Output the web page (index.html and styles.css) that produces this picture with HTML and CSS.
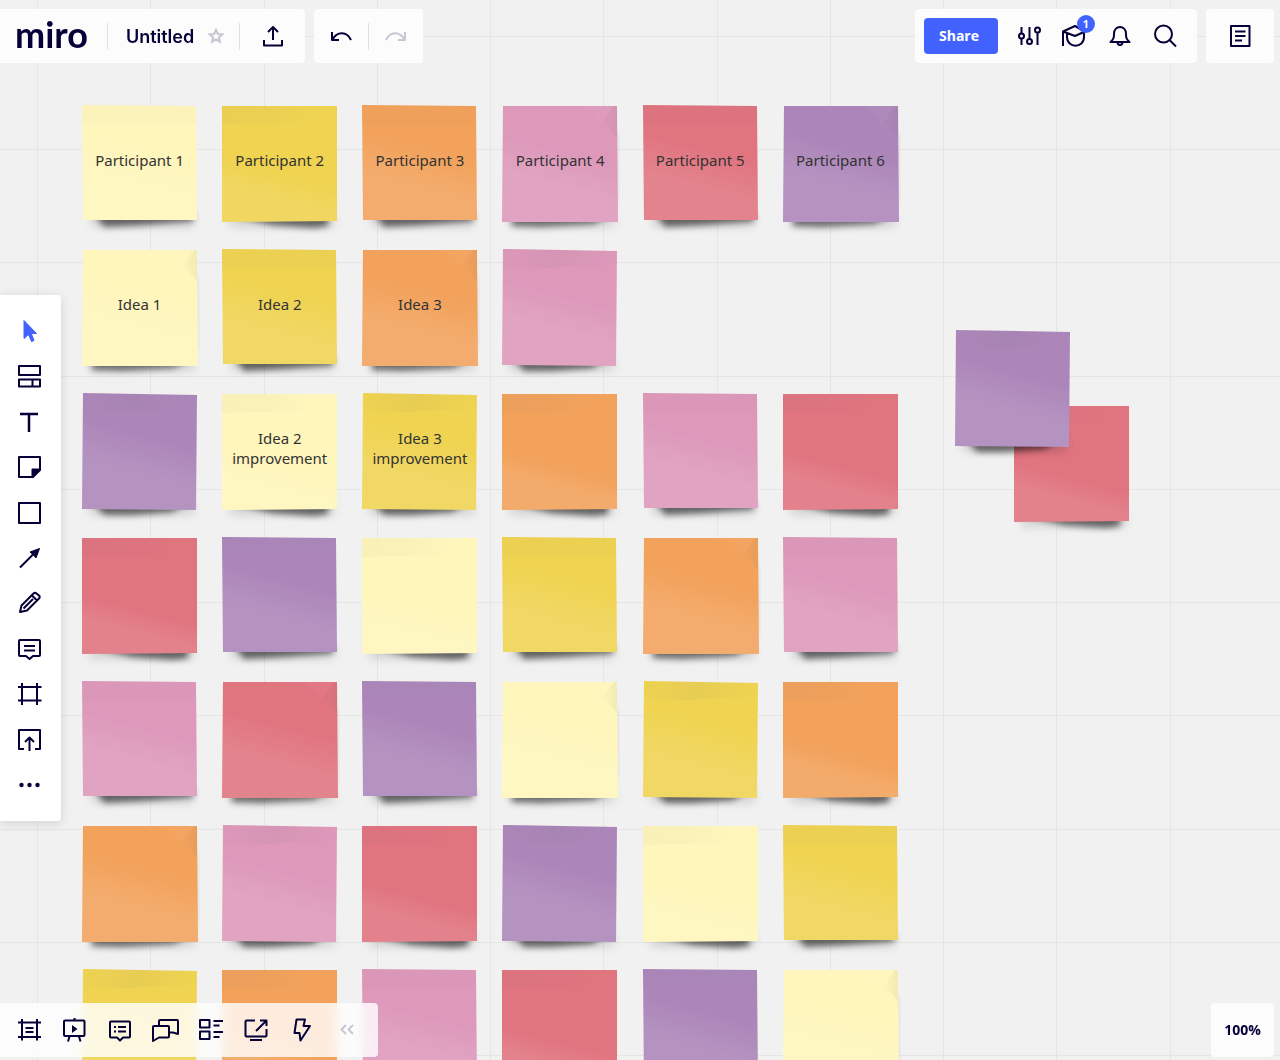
FILE: index.html
```html
<!DOCTYPE html>
<html lang="en">
<head>
<meta charset="utf-8">
<meta name="viewport" content="width=device-width, initial-scale=1">
<title>Untitled - miro</title>
<link rel="stylesheet" href="styles.css">
</head>
<body>
<svg class="sprite" width="0" height="0" aria-hidden="true">
  <defs>
    <filter id="soft" x="-20%" y="-200%" width="140%" height="500%"><feGaussianBlur stdDeviation="3"/></filter>
    <filter id="haze" x="-20%" y="-200%" width="140%" height="500%"><feGaussianBlur stdDeviation="5"/></filter>
    <linearGradient id="sheen-mid" gradientUnits="userSpaceOnUse" x1="62" y1="42" x2="52" y2="80"><stop offset="0" stop-color="#fff" stop-opacity="0"/><stop offset="1" stop-color="#fff" stop-opacity=".11"/></linearGradient>
    <linearGradient id="sheen-low" gradientUnits="userSpaceOnUse" x1="60" y1="72" x2="54" y2="95"><stop offset="0" stop-color="#fff" stop-opacity="0"/><stop offset="1" stop-color="#fff" stop-opacity=".1"/></linearGradient>
    <linearGradient id="tape-left"><stop offset="0" stop-color="#666" stop-opacity=".04"/><stop offset=".4" stop-color="#666" stop-opacity=".03"/><stop offset=".8" stop-color="#666" stop-opacity="0"/></linearGradient>
    <linearGradient id="tape-mid"><stop offset="0" stop-color="#666" stop-opacity=".01"/><stop offset=".45" stop-color="#666" stop-opacity=".06"/><stop offset="1" stop-color="#666" stop-opacity="0"/></linearGradient>
    <linearGradient id="curl" x1="0" y1="0" x2="1" y2="0"><stop offset="0" stop-color="#666" stop-opacity="0"/><stop offset="1" stop-color="#666" stop-opacity=".08"/></linearGradient>
  </defs>
  <symbol id="paper-flat" viewBox="0 0 116 117" overflow="visible">
    <path d="M8 108H112V122H10Z" fill="#000" opacity=".12" filter="url(#haze)"/>
    <path d="M12 108H111V116L60 120L22 122Z" fill="#000" opacity=".55" filter="url(#soft)"/>
    <path d="M0 0L114 1L115 115H1Z" fill="currentColor"/>
    <path d="M0 0L114 1V20H0Z" fill="#666" opacity=".02"/>
    <path d="M0 0L114 1L115 115H1Z" fill="url(#sheen-mid)"/>
  </symbol>
  <symbol id="paper-tape" viewBox="0 0 116 117" overflow="visible">
    <path d="M6 108H112V122H8Z" fill="#000" opacity=".12" filter="url(#haze)"/>
    <path d="M10 110H106V121L92 123L50 120Z" fill="#000" opacity=".55" filter="url(#soft)"/>
    <path d="M0 1H115V116L0 117Z" fill="currentColor"/>
    <path d="M0 1H115V17L0 20Z" fill="url(#tape-left)"/>
    <path d="M0 1H115V116L0 117Z" fill="url(#sheen-low)"/>
  </symbol>
  <symbol id="paper-fold" viewBox="0 0 116 117" overflow="visible">
    <path d="M6 108H112V122H8Z" fill="#000" opacity=".12" filter="url(#haze)"/>
    <path d="M108 20L116 30V100H108Z" fill="#000" opacity=".08" filter="url(#soft)"/>
    <path d="M10 110H108L92 119L40 122L10 121Z" fill="#000" opacity=".5" filter="url(#soft)"/>
    <path d="M1 1H115L116 117H0Z" fill="currentColor"/>
    <path d="M1 1H115L116 117H0Z" fill="url(#sheen-mid)"/>
    <path d="M79 1H112L99 19Q94 10 79 1Z" fill="#fff" opacity=".03"/>
    <path d="M112 1H115V33Q106 19 99 19Z" fill="url(#curl)"/>
  </symbol>
  <symbol id="paper-tilt" viewBox="0 0 116 117" overflow="visible">
    <path d="M6 108H112V122H8Z" fill="#000" opacity=".12" filter="url(#haze)"/>
    <path d="M10 108H108L90 119L50 122L22 122Z" fill="#000" opacity=".55" filter="url(#soft)"/>
    <path d="M1 0L115 2L114 117L0 116Z" fill="currentColor"/>
    <path d="M1 0L115 2V17Q60 17 30 20L1 18Z" fill="url(#tape-mid)"/>
    <path d="M1 0L115 2L114 117L0 116Z" fill="url(#sheen-mid)"/>
  </symbol>
</svg>

<main class="board" aria-label="Board">
  <div class="notes">
    <div class="note cream"><svg class="paper"><use href="#paper-flat"/></svg><p>Participant 1</p></div>
    <div class="note yellow"><svg class="paper"><use href="#paper-tape"/></svg><p>Participant 2</p></div>
    <div class="note orange"><svg class="paper"><use href="#paper-flat"/></svg><p>Participant 3</p></div>
    <div class="note pink"><svg class="paper"><use href="#paper-fold"/></svg><p>Participant 4</p></div>
    <div class="note red"><svg class="paper"><use href="#paper-flat"/></svg><p>Participant 5</p></div>
    <div class="note purple"><svg class="paper"><use href="#paper-fold"/></svg><p>Participant 6</p></div>

    <div class="note cream"><svg class="paper"><use href="#paper-fold"/></svg><p>Idea 1</p></div>
    <div class="note yellow"><svg class="paper"><use href="#paper-flat"/></svg><p>Idea 2</p></div>
    <div class="note orange"><svg class="paper"><use href="#paper-fold"/></svg><p>Idea 3</p></div>
    <div class="note pink"><svg class="paper"><use href="#paper-tilt"/></svg></div>

    <div class="note purple row-start"><svg class="paper"><use href="#paper-tilt"/></svg></div>
    <div class="note cream"><svg class="paper"><use href="#paper-tape"/></svg><p>Idea 2 improvement</p></div>
    <div class="note yellow"><svg class="paper"><use href="#paper-tilt"/></svg><p>Idea 3 improvement</p></div>
    <div class="note orange"><svg class="paper"><use href="#paper-tape"/></svg></div>
    <div class="note pink"><svg class="paper"><use href="#paper-flat"/></svg></div>
    <div class="note red"><svg class="paper"><use href="#paper-tape"/></svg></div>

    <div class="note red"><svg class="paper"><use href="#paper-tape"/></svg></div>
    <div class="note purple"><svg class="paper"><use href="#paper-flat"/></svg></div>
    <div class="note cream"><svg class="paper"><use href="#paper-tape"/></svg></div>
    <div class="note yellow"><svg class="paper"><use href="#paper-flat"/></svg></div>
    <div class="note orange"><svg class="paper"><use href="#paper-fold"/></svg></div>
    <div class="note pink"><svg class="paper"><use href="#paper-flat"/></svg></div>

    <div class="note pink"><svg class="paper"><use href="#paper-flat"/></svg></div>
    <div class="note red"><svg class="paper"><use href="#paper-fold"/></svg></div>
    <div class="note purple"><svg class="paper"><use href="#paper-flat"/></svg></div>
    <div class="note cream"><svg class="paper"><use href="#paper-fold"/></svg></div>
    <div class="note yellow"><svg class="paper"><use href="#paper-tilt"/></svg></div>
    <div class="note orange"><svg class="paper"><use href="#paper-tape"/></svg></div>

    <div class="note orange"><svg class="paper"><use href="#paper-fold"/></svg></div>
    <div class="note pink"><svg class="paper"><use href="#paper-tilt"/></svg></div>
    <div class="note red"><svg class="paper"><use href="#paper-tape"/></svg></div>
    <div class="note purple"><svg class="paper"><use href="#paper-tilt"/></svg></div>
    <div class="note cream"><svg class="paper"><use href="#paper-tape"/></svg></div>
    <div class="note yellow"><svg class="paper"><use href="#paper-flat"/></svg></div>

    <div class="note yellow"><svg class="paper"><use href="#paper-tilt"/></svg></div>
    <div class="note orange"><svg class="paper"><use href="#paper-tape"/></svg></div>
    <div class="note pink"><svg class="paper"><use href="#paper-flat"/></svg></div>
    <div class="note red"><svg class="paper"><use href="#paper-tape"/></svg></div>
    <div class="note purple"><svg class="paper"><use href="#paper-flat"/></svg></div>
    <div class="note cream"><svg class="paper"><use href="#paper-fold"/></svg></div>
  </div>
  <div class="note red loose loose-red"><svg class="paper"><use href="#paper-tape"/></svg></div>
  <div class="note purple loose loose-purple"><svg class="paper"><use href="#paper-tilt"/></svg></div>
</main>

<div class="chrome">
  <header class="topbar">
    <div class="panel title-panel">
      <a class="logo" href="#">miro</a>
      <span class="divider"></span>
      <button class="board-name" type="button">Untitled</button>
      <button class="star" type="button" aria-label="Star this board"><svg viewBox="0 0 16 16"><path d="M8 1.8L9.8 6L14.4 6.4L10.9 9.4L12 13.9L8 11.5L4 13.9L5.1 9.4L1.6 6.4L6.2 6Z"/></svg></button>
      <span class="divider"></span>
      <button class="icon export" type="button" aria-label="Export"><svg viewBox="0 0 24 24"><path d="M12 16V3M7 8L12 3L17 8M3 16V21.500H21V16"/></svg></button>
    </div>
    <div class="panel history-panel">
      <button class="icon" type="button" aria-label="Undo"><svg viewBox="0 0 24 24"><path d="M3 8V16H10M3.500 15.500C8 7 18 7 22 16"/></svg></button>
      <span class="divider"></span>
      <button class="icon faded" type="button" aria-label="Redo"><svg viewBox="0 0 24 24"><path d="M21 8V16H14M20.500 15.500C16 7 6 7 2 16"/></svg></button>
    </div>
    <div class="panel actions-panel">
      <button class="share" type="button">Share</button>
      <button class="icon" type="button" aria-label="Settings"><svg viewBox="0 0 24 24"><path d="M3.500 3V9M3.500 15V21M11.500 3V15M19.500 9V21"/><circle cx="3.500" cy="12" r="2.500"/><circle cx="11.500" cy="17.500" r="2.500"/><circle cx="19.500" cy="6" r="2.500"/></svg></button>
      <button class="icon learn" type="button" aria-label="Learning center, 1 new"><svg viewBox="0 0 24 24"><path d="M0 22V7.500L12 2L22 7.500L12 12L0 7.500M4 9.500V13C4 24.500 21 24.500 21 13V9"/></svg><span class="count">1</span></button>
      <button class="icon" type="button" aria-label="Notifications"><svg viewBox="0 0 24 24"><path d="M2.500 18C6 15 6 13 6 10C6 0.500 18 0.500 18 10C18 13 18 15 21.500 18ZM9.500 18C9.500 22 14.500 22 14.500 18"/></svg></button>
      <button class="icon" type="button" aria-label="Search"><svg viewBox="0 0 24 24"><circle cx="10.500" cy="10" r="8.500"/><path d="M16.500 16L23 22.500"/></svg></button>
    </div>
    <div class="panel notes-panel">
      <button class="icon" type="button" aria-label="Notes"><svg viewBox="0 0 24 24"><path d="M3 2H21.500V22H3Z"/><path d="M7 7.500H17.500M7 12H17.500M7 16.500H14"/></svg></button>
    </div>
  </header>

  <nav class="tools" aria-label="Tools">
    <button class="icon active" type="button" aria-label="Select"><svg viewBox="0 0 24 24"><path class="solid" d="M6 1.500V19.500L10.500 15.500L13.500 22.500L16 21.500L13.300 14.500H18.500Z"/></svg></button>
    <button class="icon" type="button" aria-label="Templates"><svg viewBox="0 0 24 24"><path d="M1 2H22V11H1ZM1 15.500H22V22.500H1ZM14.500 15.500V22.500"/></svg></button>
    <button class="icon" type="button" aria-label="Text"><svg viewBox="0 0 24 24"><path class="thick" d="M2 4H20M11 4V22"/></svg></button>
    <button class="icon" type="button" aria-label="Sticky note"><svg viewBox="0 0 24 24"><path d="M1 2H22V15L15 22H1Z"/><path class="solid" d="M14 22V14H22L14 22Z"/></svg></button>
    <button class="icon" type="button" aria-label="Shape"><svg viewBox="0 0 24 24"><path d="M1 2H22V22H1Z"/></svg></button>
    <button class="icon" type="button" aria-label="Connection line"><svg viewBox="0 0 24 24"><path d="M2 21.500L16 7.500"/><path class="solid" d="M21.500 2.500L18 12L15.500 9L12 6Z"/></svg></button>
    <button class="icon" type="button" aria-label="Pen"><svg viewBox="0 0 24 24"><path d="M2 21L3.500 14.500L15.500 2.500Q17 1 18.500 2.500L21 4.500Q22.500 6 21 7.500L9 19.500ZM14 4.500L19 9.500M5.500 17.500L15 8"/></svg></button>
    <button class="icon" type="button" aria-label="Comment"><svg viewBox="0 0 24 24"><path d="M2 3H21Q22 3 22 4V18Q22 19 21 19H15L11.500 22L8 19H2Q1 19 1 18V4Q1 3 2 3ZM6 9H17M6 13.500H17"/></svg></button>
    <button class="icon" type="button" aria-label="Frame"><svg viewBox="0 0 24 24"><path d="M4 1V23M19 1V23M0 5H23.500M0 18.500H23.500"/></svg></button>
    <button class="icon" type="button" aria-label="Upload"><svg viewBox="0 0 24 24"><path d="M6 21H1V2H22V21H17M11.500 23V10M7 14L11.500 9.500L16 14"/></svg></button>
    <button class="icon" type="button" aria-label="More"><svg viewBox="0 0 24 24"><circle class="dot" cx="3.500" cy="12" r="2.200"/><circle class="dot" cx="11.500" cy="12" r="2.200"/><circle class="dot" cx="19.500" cy="12" r="2.200"/></svg></button>
  </nav>

  <footer class="bottombar">
    <div class="panel view-panel">
      <button class="icon" type="button" aria-label="Frames"><svg viewBox="0 0 24 24"><path d="M5 1V22.500M20 1V22.500M1 4.500H24M1 19H24M8.500 10H16.500M8.500 14H16.500"/></svg></button>
      <button class="icon" type="button" aria-label="Presentation"><svg viewBox="0 0 24 24"><path d="M3 2.500H21.500Q22.500 2.500 22.500 3.500V17Q22.500 18 21.500 18H3Q2 18 2 17V3.500Q2 2.500 3 2.500ZM12.500 0V3M7.500 18.500L6 23.500M17 18.500L18.500 23.500"/><path class="dot" d="M10 7L15.500 11L10 15Z"/></svg></button>
      <button class="icon" type="button" aria-label="Cards"><svg viewBox="0 0 24 24"><path d="M3 3.500H21Q22 3.500 22 4.500V18.500Q22 19.500 21 19.500H15L12 22.500L9 19.500H3Q2 19.500 2 18.500V4.500Q2 3.500 3 3.500ZM6 9H8M10 9H18M6 13.500H8M10 13.500H18"/></svg></button>
      <button class="icon" type="button" aria-label="Chat"><svg viewBox="0 0 24 24"><path d="M6 7V3Q6 2 7 2H24Q25 2 25 3V16L20 14.500H17M0 23V9Q0 8 1 8H15Q16 8 16 9V18.500Q16 19.500 15 19.500H6Z"/></svg></button>
      <button class="icon" type="button" aria-label="Kanban"><svg viewBox="0 0 24 24"><path d="M1 2H10.500V9.500H1ZM1 13.500H10.500V21H1ZM14.500 3H24M14.500 7.500H20.500M14.500 14H24M14.500 19H20.500"/></svg></button>
      <button class="icon" type="button" aria-label="Screen share"><svg viewBox="0 0 24 24"><path d="M11 2.500H2.500Q1.500 2.500 1.500 3.500V17.500Q1.500 18.500 2.500 18.500H21.500Q22.500 18.500 22.500 17.500V11M16 2.500H22.500V8M22 3L12 13M6 22H18"/></svg></button>
      <button class="icon" type="button" aria-label="Activities"><svg viewBox="0 0 24 24"><path d="M6.500 1.500H15L13.500 8H20L10.500 22.500L9.500 15H4.500Z"/></svg></button>
      <button class="icon faded" type="button" aria-label="Collapse"><svg viewBox="0 0 24 24"><path d="M11 7L6.500 11.500L11 16M18 7L13.500 11.500L18 16"/></svg></button>
    </div>
    <button class="panel zoom" type="button">100%</button>
  </footer>
</div>
</body>
</html>
```

FILE: styles.css
```css
* {
  box-sizing: border-box;
}

body {
  display: grid;
  height: 100vh;
  margin: 0;
  overflow: hidden;
  color: #050038;
  font-family: "Open Sans", "Noto Sans", sans-serif;
}

button {
  padding: 0;
  border: 0;
  background: none;
  color: inherit;
  font: inherit;
  cursor: pointer;
}

.sprite {
  position: absolute;
}

/* Board */

.board {
  position: relative;
  grid-area: 1 / 1;
  min-height: 0;
  padding: 105px 0 0 82px;
  overflow: hidden;
  background-color: #f1f1f1;
  background-image:
    linear-gradient(90deg, #e5e5e5 1px, transparent 1px 113px, #e5e5e5 113px 114px, transparent 114px 227px, #e5e5e5 227px 228px, transparent 228px 340px, #e5e5e5 340px 341px, transparent 341px),
    linear-gradient(#e5e5e5 1px, transparent 1px 113px, #e5e5e5 113px 114px, transparent 114px 226px, #e5e5e5 226px 227px, transparent 227px 340px, #e5e5e5 340px 341px, transparent 341px);
  background-size: 453px 453px;
  background-position: 37px 36px;
}

.notes {
  display: grid;
  grid-template-columns: repeat(6, minmax(0, 1fr));
  grid-auto-rows: 116px;
  gap: 28px 25px;
  width: 816px;
}

.note {
  display: grid;
  grid-template-columns: minmax(0, 1fr);
  align-items: center;
  height: 116px;
}

.row-start {
  grid-column-start: 1;
}

.paper {
  grid-area: 1 / 1;
  align-self: start;
  width: 116px;
  height: 117px;
  overflow: visible;
}

.note p {
  grid-area: 1 / 1;
  z-index: 1;
  margin: 0;
  padding: 0 8px 8px;
  color: #333;
  font-family: "Noto Sans", sans-serif;
  font-size: 15px;
  line-height: 20px;
  text-align: center;
}

.cream { color: #fef6bb; }
.yellow { color: #efd351; }
.orange { color: #f2a25b; }
.pink { color: #dd98ba; }
.red { color: #e0747f; }
.purple { color: #ac86b9; }

.loose {
  position: absolute;
}

.loose-red {
  top: 405px;
  left: 1014px;
}

.loose-purple {
  top: 330px;
  left: 955px;
}

/* Panels over the board */

.chrome {
  z-index: 1;
  display: grid;
  grid-area: 1 / 1;
  grid-template-rows: auto 1fr auto;
  min-height: 0;
  pointer-events: none;
}

.panel,
.tools {
  pointer-events: auto;
}

.panel {
  display: flex;
  align-items: center;
  height: 54px;
  border-radius: 4px;
  background: rgba(255, 255, 255, .8);
  backdrop-filter: blur(6px);
}

.topbar {
  display: flex;
  gap: 9px;
  padding: 9px 6px 0 0;
}

.divider {
  width: 1px;
  height: 27px;
  background: #e1e0e7;
}

.title-panel {
  padding: 0 20px 0 15px;
  border-radius: 0 4px 4px 0;
}

.logo {
  margin-right: 19px;
  padding-bottom: 4px;
  color: inherit;
  font-family: Lato, sans-serif;
  font-size: 36px;
  font-weight: 700;
  line-height: 40px;
  text-decoration: none;
}

.board-name {
  margin: 0 14px 0 18px;
  font-family: Inter, sans-serif;
  font-size: 18px;
  font-weight: 600;
}

.star {
  display: flex;
  margin-right: 15px;
}

.star svg {
  width: 16px;
  height: 16px;
  fill: none;
  stroke: #c8c6d4;
  stroke-width: 2;
}

.export {
  margin-left: 21px;
}

.history-panel {
  gap: 15px;
  padding: 0 15px;
}

.actions-panel {
  gap: 20px;
  margin-left: auto;
  padding: 0 20px 0 9px;
}

.actions-panel .icon + .icon {
  margin-left: 1px;
}

.share {
  width: 74px;
  height: 36px;
  padding: 0 4px 2px 0;
  border-radius: 4px;
  background: #4262ff;
  color: #fff;
  font-size: 14px;
  font-weight: 700;
}

.notes-panel {
  padding: 0 22px;
}

.icon {
  display: flex;
  flex: none;
  width: 24px;
  height: 24px;
}

.icon svg {
  width: 24px;
  height: 24px;
  overflow: visible;
  fill: none;
  stroke: currentColor;
  stroke-width: 2;
  stroke-linejoin: round;
}

.icon .solid {
  fill: currentColor;
  stroke-width: 1;
}

.icon .dot {
  fill: currentColor;
  stroke: none;
}

.icon .thick {
  stroke-width: 2.5;
}

.faded {
  color: #c8c6d4;
}

.learn {
  position: relative;
}

.count {
  position: absolute;
  top: -9px;
  left: 14px;
  width: 18px;
  height: 18px;
  border-radius: 9px;
  background: #4262ff;
  color: #fff;
  font-size: 11px;
  font-weight: 700;
  line-height: 18px;
}

.tools {
  display: flex;
  flex-direction: column;
  align-items: center;
  align-self: center;
  justify-content: space-between;
  justify-self: start;
  width: 61px;
  min-height: 526px;
  margin-top: 50px;
  padding: 24px 2px 24px 1px;
  border-radius: 0 4px 4px 0;
  background: #fff;
  box-shadow: 0 2px 12px rgba(0, 0, 0, .13);
}

.active {
  color: #4262ff;
}

.bottombar {
  display: flex;
  justify-content: space-between;
  padding: 0 6px 3px 0;
}

.view-panel {
  justify-content: space-between;
  width: 378px;
  padding: 0 19px 0 17px;
  border-radius: 0 4px 4px 0;
}

.zoom {
  justify-content: center;
  width: 63px;
  padding-bottom: 2px;
  font-size: 14px;
  font-weight: 700;
}
```
